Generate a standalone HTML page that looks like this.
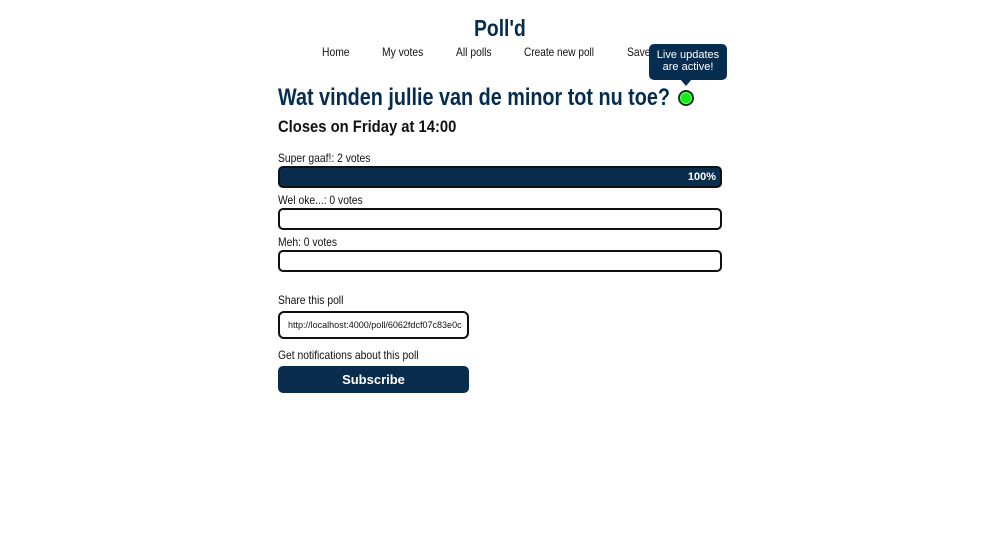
<!DOCTYPE html>
<html><head><meta charset="utf-8"><style>
*{margin:0;padding:0;box-sizing:border-box}
body{width:1000px;height:560px;background:#fff;font-family:"Liberation Sans",sans-serif;color:#111;position:relative;overflow:hidden}
.t{position:absolute;white-space:nowrap;transform-origin:left center;transform:scaleX(.86);line-height:1}
.navy{color:#062d4f}
.bar{position:absolute;left:278px;width:444px;height:22px;border:2px solid #111;border-radius:5px;background:#fff}
</style></head><body>
<div class="t navy" style="left:474px;top:17px;font-size:23px;font-weight:bold;transform:scaleX(.84)">Poll'd</div>
<div class="t" style="left:322px;top:46px;font-size:12px">Home</div>
<div class="t" style="left:382px;top:46px;font-size:12px">My votes</div>
<div class="t" style="left:456px;top:46px;font-size:12px">All polls</div>
<div class="t" style="left:524px;top:46px;font-size:12px;transform:scaleX(.84)">Create new poll</div>
<div class="t" style="left:627px;top:46px;font-size:12px">Save</div>
<div style="position:absolute;left:649px;top:44px;width:78px;height:36px;background:#062d4f;border-radius:5px;color:#fff;font-size:11px;text-align:center;line-height:12px;padding-top:5px">Live updates<br>are active!</div>
<div style="position:absolute;left:680px;top:79px;width:0;height:0;border-left:6px solid transparent;border-right:6px solid transparent;border-top:7px solid #062d4f"></div>
<div class="t navy" style="left:278px;top:86px;font-size:24px;font-weight:bold;transform:scaleX(.825)">Wat vinden jullie van de minor tot nu toe?</div>
<div style="position:absolute;left:678px;top:90px;width:16px;height:16px;border-radius:50%;background:#11ee11;border:2px solid #0f3b1a;box-shadow:inset 0 0 0 1px #8f8"></div>
<div class="t" style="left:278px;top:118px;font-size:17px;font-weight:bold;transform:scaleX(.87)">Closes on Friday at 14:00</div>
<div class="t" style="left:278px;top:152px;font-size:12px">Super gaaf!: 2 votes</div>
<div class="bar" style="top:166px;background:#0a2d4e"><span style="position:absolute;right:4px;top:3px;color:#fff;font-size:11px;font-weight:bold">100%</span></div>
<div class="t" style="left:278px;top:194px;font-size:12px">Wel oke...: 0 votes</div>
<div class="bar" style="top:208px"></div>
<div class="t" style="left:278px;top:236px;font-size:12px">Meh: 0 votes</div>
<div class="bar" style="top:250px"></div>
<div class="t" style="left:278px;top:294px;font-size:12px">Share this poll</div>
<div style="position:absolute;left:278px;top:311px;width:191px;height:28px;border:2px solid #111;border-radius:6px;overflow:hidden"><span class="t" style="left:8px;top:8px;font-size:9.5px;transform:scaleX(.95)">http://localhost:4000/poll/6062fdcf07c83e0c</span></div>
<div class="t" style="left:278px;top:349px;font-size:12px">Get notifications about this poll</div>
<div style="position:absolute;left:278px;top:366px;width:191px;height:27px;background:#0a2d4e;border-radius:5px;color:#fff;font-size:13px;font-weight:bold;text-align:center;line-height:27px">Subscribe</div>
</body></html>
